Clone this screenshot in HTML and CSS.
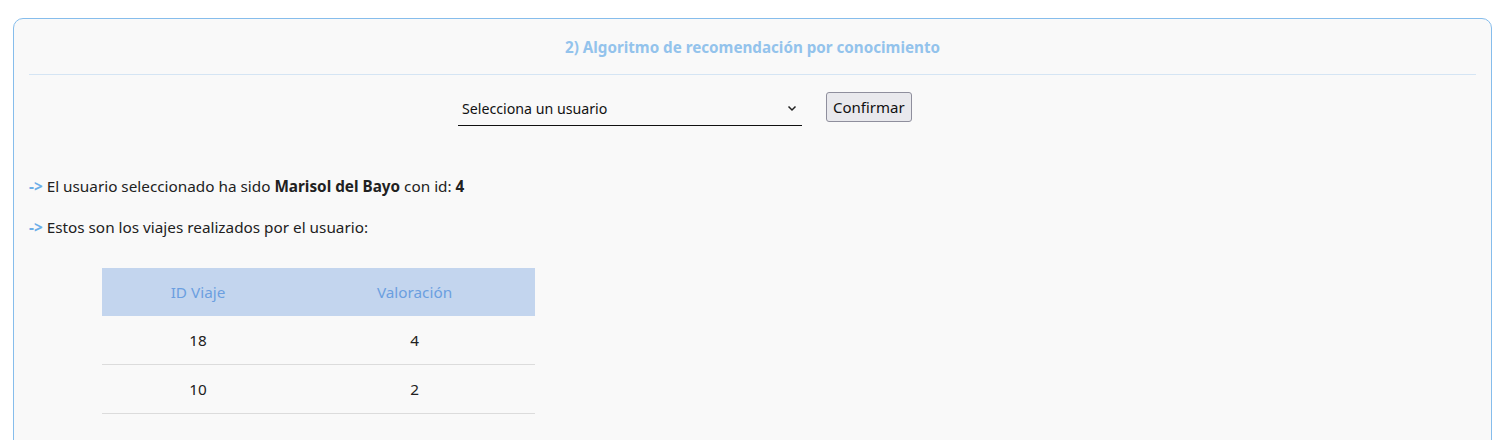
FILE: index.html
```html
<!DOCTYPE html>
<html lang="es">
<head>
<meta charset="utf-8">
<title>Recomendación</title>
<link rel="stylesheet" href="styles.css">
</head>
<body>
<section class="card">
  <header class="card-header">
    <h2 class="card-title">2) Algoritmo de recomendación por conocimiento</h2>
  </header>
  <form class="user-form">
    <div class="select-wrap">
      <span class="select-text">Selecciona un usuario</span>
      <svg class="chevron" width="10" height="7" viewBox="0 0 10 7"><path d="M1.5 1.5 L5 5 L8.5 1.5" fill="none" stroke="#222" stroke-width="1.5"/></svg>
    </div>
    <button type="button" class="btn">Confirmar</button>
  </form>
  <p class="line"><span class="arrow">-&gt;</span> El usuario seleccionado ha sido <b>Marisol del Bayo</b> con id: <b>4</b></p>
  <p class="line"><span class="arrow">-&gt;</span> Estos son los viajes realizados por el usuario:</p>
  <table class="trips">
    <thead>
      <tr><th class="col-id">ID Viaje</th><th>Valoración</th></tr>
    </thead>
    <tbody>
      <tr><td>18</td><td>4</td></tr>
      <tr><td>10</td><td>2</td></tr>
    </tbody>
  </table>
</section>
</body>
</html>
```
FILE: styles.css
```css
html, body { margin: 0; padding: 0; background: #ffffff; }
body {
  font-family: "Noto Sans", "Open Sans", sans-serif;
  color: #212121;
  font-size: 15.3px;
  padding: 18px 14px 0 13px;
  height: 440px;
  box-sizing: border-box;
  overflow: hidden;
}
.card {
  border: 1px solid #86bdec;
  border-radius: 10px;
  background: #f9f9f9;
  padding: 0 15px 40px;
  min-height: 500px;
}
.card-header {
  height: 55px;
  border-bottom: 1px solid #d5e5f4;
  display: flex;
  align-items: center;
  justify-content: center;
}
.card-title {
  margin: 0;
  font-size: 15.2px;
  font-weight: 700;
  color: #93c3ec;
}
.user-form {
  display: flex;
  align-items: flex-start;
  gap: 24px;
  padding: 17px 0 0 429px;
  height: 84px;
}
.select-wrap {
  width: 344px;
  height: 34px;
  box-sizing: border-box;
  border-bottom: 1px solid #111;
  display: flex;
  align-items: center;
  justify-content: space-between;
  padding: 0 5px 0 4px;
}
.select-text { font-size: 14.2px; color: #111; }
.btn {
  font-family: inherit;
  font-size: 15px;
  color: #111;
  background: #e9e9ed;
  border: 1px solid #8f8f9d;
  border-radius: 3px;
  height: 30px;
  padding: 0 6px;
}
.line { margin: 0 0 20px 0; line-height: 21px; }
.arrow { color: #6caee8; font-weight: 700; }
.trips {
  border-collapse: collapse;
  margin: 30px 0 0 73px;
  width: 433px;
  table-layout: fixed;
}
.trips .col-id { width: 192px; }
.trips th {
  background: #c3d5ee;
  color: #6b9fe0;
  font-weight: 400;
  height: 48px;
  padding: 0;
}
.trips td {
  height: 48px;
  text-align: center;
  border-bottom: 1px solid #dcdcdc;
  padding: 0;
}
```
